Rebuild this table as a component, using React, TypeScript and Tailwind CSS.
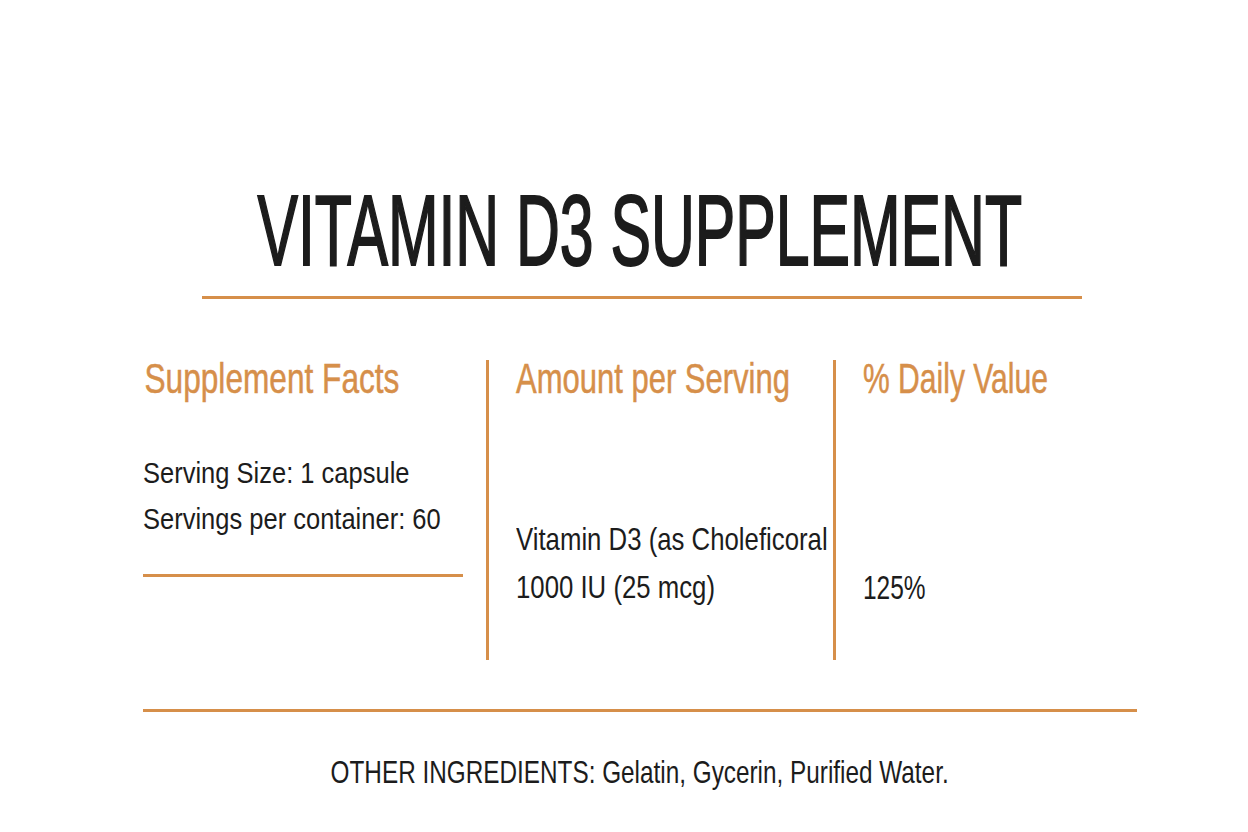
const font = { fontFamily: '"Liberation Sans", Arial, sans-serif' };

export default function App() {
  return (
    <div className="w-full h-[832px] bg-white flex flex-col items-center pl-[32px] text-[#1c1c1c] overflow-hidden" style={font}>
      <h1 className="mt-[180px] h-[100px] text-[100px] leading-none font-normal [-webkit-text-stroke:2px_#1c1c1c] whitespace-nowrap inline-block scale-x-[0.607] origin-center">
        VITAMIN D3 SUPPLEMENT
      </h1>
      <div className="mt-[16px] ml-[4px] w-[880px] h-[3px] bg-[#d68f4a]" />

      <div className="mt-[59px] w-[994px] flex items-start">
        <div className="w-[343px] shrink-0">
          <div className="h-[42px] text-[42px] leading-none text-[#d68f4a] [-webkit-text-stroke:0.5px_#d68f4a] whitespace-nowrap inline-block scale-x-[0.753] origin-left pl-[2px]">
            Supplement Facts
          </div>
          <div className="mt-[50px] text-[30px] leading-[46px] whitespace-nowrap scale-x-[0.85] origin-left">
            <div>Serving Size: 1 capsule</div>
            <div>Servings per container: 60</div>
          </div>
          <div className="mt-[32px] w-[320px] h-[3px] bg-[#d68f4a]" />
        </div>

        <div className="mt-[2px] w-[3px] h-[300px] bg-[#d68f4a] shrink-0" />

        <div className="w-[344px] shrink-0 pl-[27px]">
          <div className="h-[42px] text-[42px] leading-none text-[#d68f4a] [-webkit-text-stroke:0.5px_#d68f4a] whitespace-nowrap inline-block scale-x-[0.738] origin-left">
            Amount per Serving
          </div>
          <div className="mt-[115px] text-[32px] leading-[48px] whitespace-nowrap scale-x-[0.805] origin-left">
            <div>Vitamin D3 (as Choleficoral</div>
            <div>1000 IU (25 mcg)</div>
          </div>
        </div>

        <div className="mt-[2px] w-[3px] h-[300px] bg-[#d68f4a] shrink-0" />

        <div className="flex-1 pl-[27px]">
          <div className="h-[42px] text-[42px] leading-none text-[#d68f4a] [-webkit-text-stroke:0.5px_#d68f4a] whitespace-nowrap inline-block scale-x-[0.716] origin-left">
            % Daily Value
          </div>
          <div className="mt-[163px] text-[34px] leading-[48px] whitespace-nowrap scale-x-[0.72] origin-left">125%</div>
        </div>
      </div>

      <div className="mt-[49px] w-[994px] h-[3px] bg-[#d68f4a]" />
      <p className="mt-[44px] text-[32px] leading-none whitespace-nowrap scale-x-[0.76] origin-center">
        OTHER INGREDIENTS: Gelatin, Gycerin, Purified Water.
      </p>
    </div>
  );
}
